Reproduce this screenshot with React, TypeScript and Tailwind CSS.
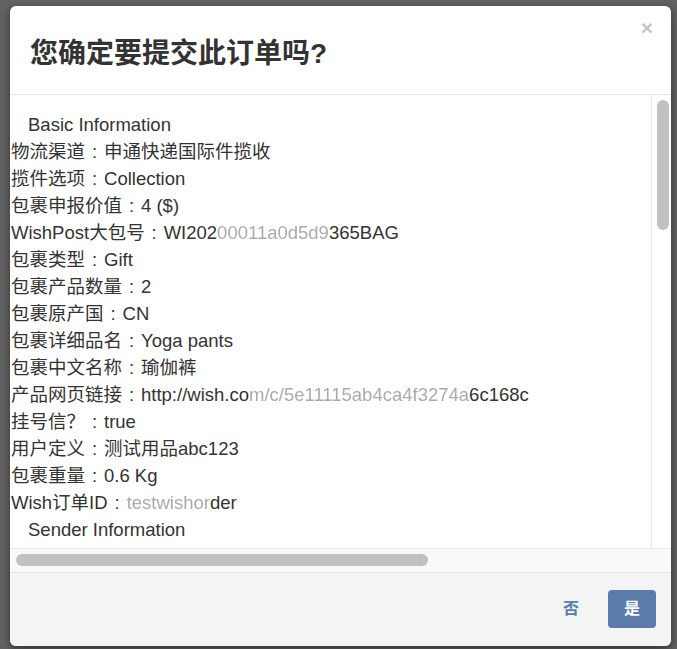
import React from "react";

type Row = {
  label: string;
  value: React.ReactNode;
};

function Blur({ children }: { children: React.ReactNode }) {
  return <span className="text-[#ababab] blur-[0.7px]">{children}</span>;
}

const basicRows: Row[] = [
  { label: "物流渠道", value: "申通快递国际件揽收" },
  { label: "揽件选项", value: "Collection" },
  { label: "包裹申报价值", value: "4 ($)" },
  {
    label: "WishPost大包号",
    value: (
      <>
        WI202<Blur>00011a0d5d9</Blur>365BAG
      </>
    ),
  },
  { label: "包裹类型", value: "Gift" },
  { label: "包裹产品数量", value: "2" },
  { label: "包裹原产国", value: "CN" },
  { label: "包裹详细品名", value: "Yoga pants" },
  { label: "包裹中文名称", value: "瑜伽裤" },
  {
    label: "产品网页链接",
    value: (
      <>
        http://wish.co<Blur>m/c/5e11115ab4ca4f3274a</Blur>6c168c
      </>
    ),
  },
  { label: "挂号信？", value: "true" },
  { label: "用户定义", value: "测试用品abc123" },
  { label: "包裹重量", value: "0.6 Kg" },
  {
    label: "Wish订单ID",
    value: (
      <>
        <Blur>testwishor</Blur>der
      </>
    ),
  },
];

export default function App() {
  return (
    <div className="h-[649px] w-[677px] overflow-hidden bg-[#626262] pl-[10px] pt-[6px] font-['Liberation_Sans','Noto_Sans_CJK_SC',sans-serif] text-[#333]">
      <div className="flex h-[640px] w-[661px] flex-col overflow-hidden rounded-[6px] bg-white shadow-[0_3px_9px_rgba(0,0,0,0.5)]">
        {/* header */}
        <div className="flex h-[89px] shrink-0 items-start justify-between border-b border-[#e5e5e5]">
          <h4 className="ml-[20px] pt-[32px] text-[28px] font-bold leading-[32px]">
            您确定要提交此订单吗?
          </h4>
          <button className="mr-[18px] mt-[11px] text-[21px] font-bold leading-[21px] text-[#c4c4c4]">
            ×
          </button>
        </div>

        {/* body */}
        <div className="flex h-[454px] shrink-0 border-b border-[#e8e8e8]">
          <div className="flex-1 overflow-hidden whitespace-nowrap pl-[1px] pt-[16px] text-[18.5px] leading-[27px]">
            <div className="h-[27px] pl-[17px]">Basic Information</div>
            {basicRows.map((row) => (
              <div key={row.label} className="h-[27px]">
                {row.label}
                <span className="inline-block w-[19px] text-center">:</span>
                {row.value}
              </div>
            ))}
            <div className="h-[27px] pl-[17px]">Sender Information</div>
          </div>
          <div className="w-[20px] border-l border-[#e5e5e5] bg-white">
            <div className="ml-[5px] mt-[5px] h-[130px] w-[12px] rounded-full bg-[#c1c1c1]" />
          </div>
        </div>
        <div className="h-[23px] shrink-0 bg-[#f9f9f9] pl-[6px] pt-[5px]">
          <div className="h-[12px] w-[412px] rounded-full bg-[#c1c1c1]" />
        </div>

        {/* footer */}
        <div className="flex flex-1 items-start justify-end border-t border-[#e5e5e5] bg-[#f4f4f4] pr-[15px] pt-[17px]">
          <button className="h-[38px] px-[12px] text-[16px] font-bold text-[#5a7bab]">
            否
          </button>
          <button className="ml-[17px] h-[38px] w-[48px] rounded-[4px] bg-[#5a7bab] text-[16px] font-bold text-white">
            是
          </button>
        </div>
      </div>
    </div>
  );
}
